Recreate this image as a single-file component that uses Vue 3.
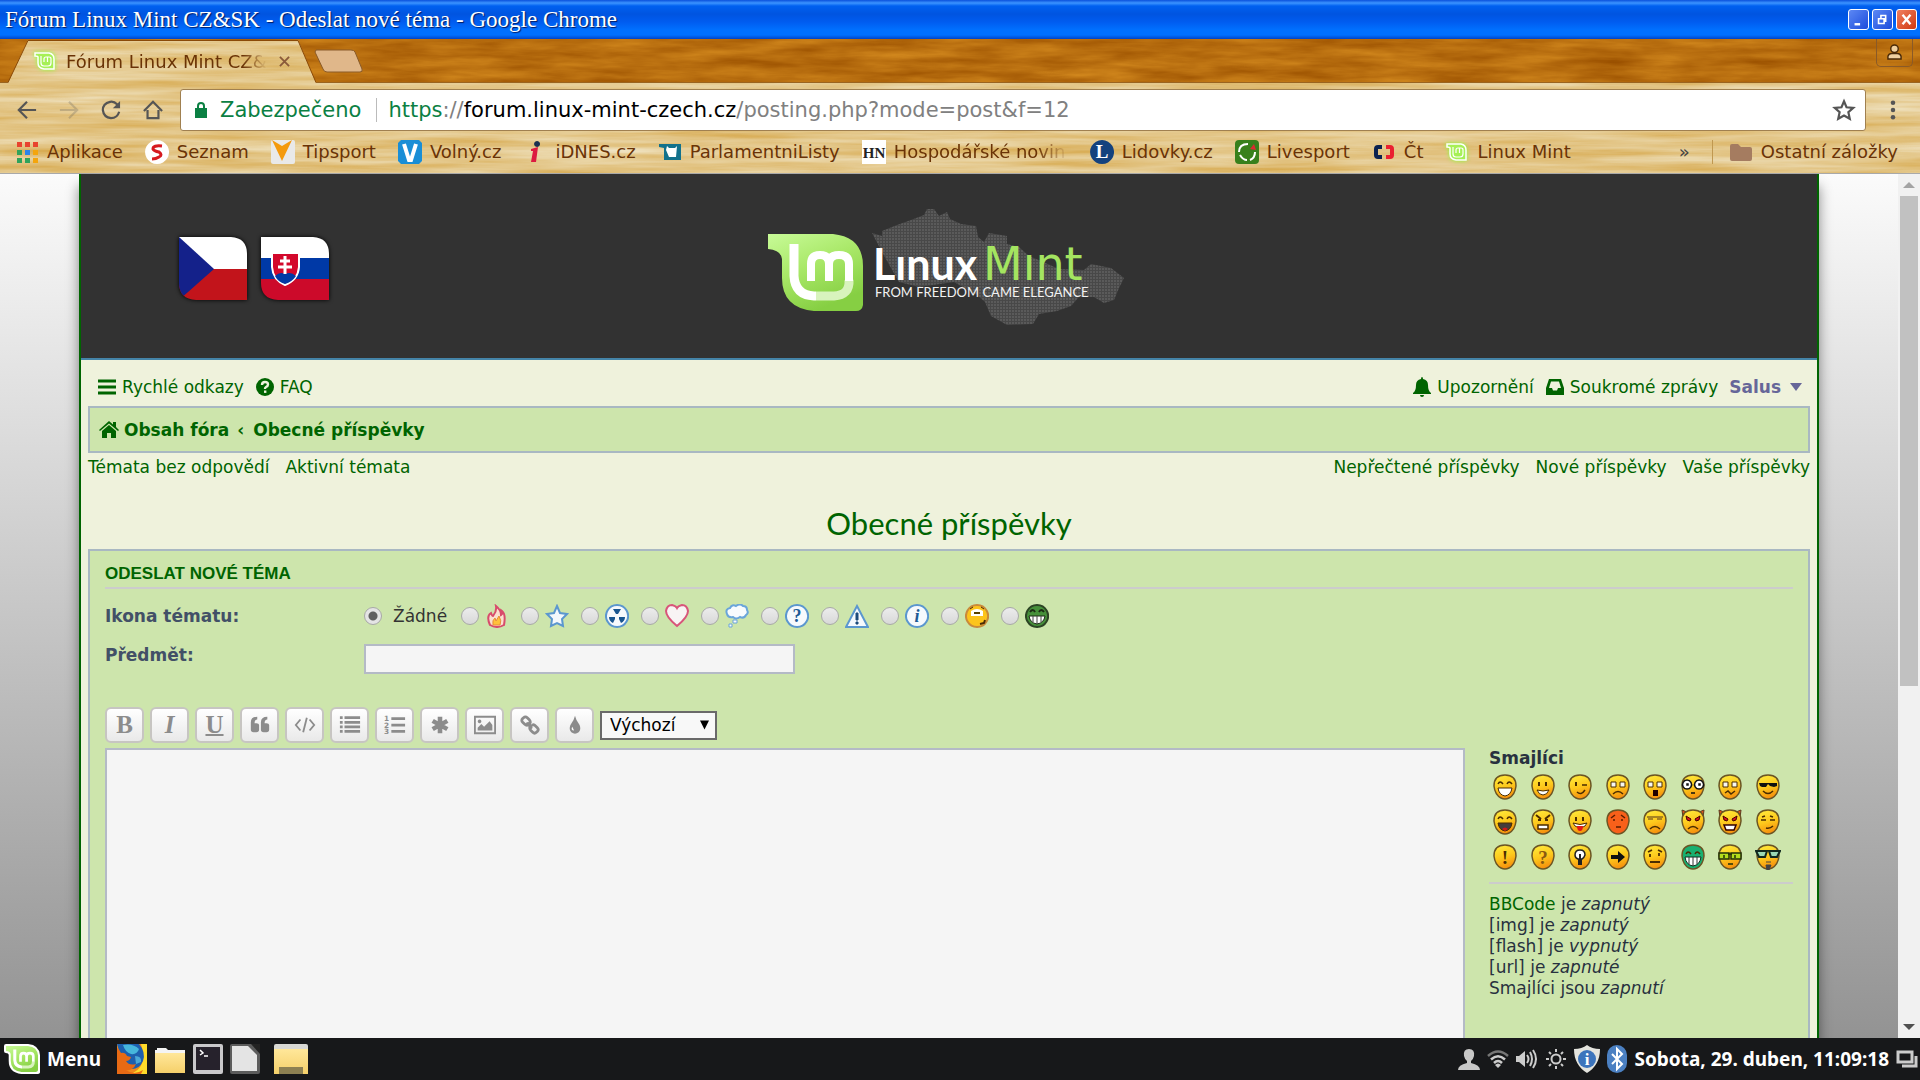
<template>
  <div class="desktop">
    <svg class="defs" aria-hidden="true">
      <defs>
        <filter id="wood-light" x="0" y="0" width="100%" height="100%" color-interpolation-filters="sRGB">
          <feTurbulence type="fractalNoise" baseFrequency="0.006 0.12" numOctaves="4" seed="7" />
          <feColorMatrix values="0.12 0 0 0 0.83  0.28 0 0 0 0.635  0.56 0 0 0 0.25  0 0 0 0 1" />
        </filter>
        <filter id="wood-dark" x="0" y="0" width="100%" height="100%" color-interpolation-filters="sRGB">
          <feTurbulence type="fractalNoise" baseFrequency="0.014 0.1" numOctaves="4" seed="3" />
          <feColorMatrix values="0.26 0 0 0 0.59  0.26 0 0 0 0.3  0.14 0 0 0 -0.01  0 0 0 0 1" />
        </filter>
        <linearGradient id="mint-fill" x1="0" y1="0" x2="0.5" y2="1">
          <stop offset="0" stop-color="#c8fb98" />
          <stop offset="0.5" stop-color="#a9e868" />
          <stop offset="1" stop-color="#86cf43" />
        </linearGradient>
        <linearGradient id="face" x1="0.3" y1="0" x2="0.6" y2="1">
          <stop offset="0" stop-color="#ffe93a" />
          <stop offset="0.5" stop-color="#fdc81c" />
          <stop offset="1" stop-color="#f58a0c" />
        </linearGradient>
        <linearGradient id="folder" x1="0" y1="0" x2="0" y2="1">
          <stop offset="0" stop-color="#ffe79a" />
          <stop offset="1" stop-color="#f5d06a" />
        </linearGradient>
        <pattern id="dots" width="3" height="3" patternUnits="userSpaceOnUse">
          <rect width="3" height="3" fill="#484848" />
          <rect width="2" height="2" fill="#5a5a5a" />
        </pattern>
        <symbol id="mint" viewBox="0 0 95 77">
          <path d="M0 0H65Q95 3 95 32V71Q94 77 88 77H46Q14 74 14 44V25Q13 16 0 15Z" fill="url(#mint-fill)" />
          <path d="M48 62H66Q82 61 81 46" fill="none" stroke="#d8f3bd" stroke-width="9" />
          <path d="M26 10V42Q27 61 46 62H48" fill="none" stroke="#fff" stroke-width="9" />
          <path d="M43 47V30Q43 21 52 21Q61 21 61 30V47M61 30Q61 21 71 21Q81 21 81 30V47" fill="none" stroke="#fff" stroke-width="8" />
        </symbol>
        <symbol id="mint-small" viewBox="0 0 24 24">
          <path d="M2 4H16Q21 5 21 10V20H11Q5 19 5 14V8Q5 7 2 7Z" fill="#a6f056" stroke="#fff" stroke-width="1.500" />
          <path d="M8 7V14Q8 17 11 17H15Q18 17 18 14V10Q18 8 16 8H13Q11 8 11 10V13M14.500 8V13" fill="none" stroke="#fff" stroke-width="1.200" />
        </symbol>
      </defs>
    </svg>

    <header class="titlebar">
      <h1>Fórum Linux Mint CZ&amp;SK - Odeslat nové téma - Google Chrome</h1>
      <div class="window-buttons">
        <button aria-label="Minimalizovat"><svg viewBox="0 0 20 24"><path d="M5 18h7" stroke="#fff" stroke-width="3" /></svg></button>
        <button aria-label="Obnovit"><svg viewBox="0 0 20 24"><path d="M5 11h7v6H5zM8 10V7h6v7h-2" fill="none" stroke="#fff" stroke-width="2" /></svg></button>
        <button class="close" aria-label="Zavřít"><svg viewBox="0 0 20 24"><path d="M5 6l10 12M15 6L5 18" stroke="#fff" stroke-width="3" /></svg></button>
      </div>
    </header>

    <section class="chrome">
      <svg class="wood"><rect width="100%" height="100%" filter="url(#wood-light)" /></svg>
      <div class="tabstrip">
        <svg class="wood"><rect width="100%" height="100%" filter="url(#wood-dark)" /></svg>
        <div class="tab">
          <svg class="wood tab-wood"><rect width="100%" height="100%" filter="url(#wood-light)" /></svg>
          <svg class="wood" viewBox="0 0 308 43"><path d="M0 43L20 1H290L308 43" fill="none" stroke="#8a4a08" /></svg>
          <svg class="favicon glow"><use href="#mint-small" /></svg>
          <span class="tab-title">Fórum Linux Mint CZ&amp;</span>
          <button class="tab-close" aria-label="Zavřít kartu"><svg viewBox="0 0 12 12"><path d="M1 1l10 10M11 1L1 11" stroke="#8a5a3a" stroke-width="2" /></svg></button>
        </div>
        <button class="new-tab" aria-label="Nová karta"><svg viewBox="0 0 50 24"><path d="M2 1H37Q40 1 41 3L48 20Q49 23 46 23H13Q10 23 9 20L1 3Z" fill="#e0b78a" stroke="#8a5a28" /></svg></button>
        <button class="profile" aria-label="Profil">
          <svg viewBox="0 0 16 18"><circle cx="8" cy="5" r="4" fill="#f0d0a0" stroke="#4a2a08" stroke-width="1.500" /><path d="M1 16V13Q2 10 5 10H11Q14 10 15 13V16Z" fill="#f0d0a0" stroke="#4a2a08" stroke-width="1.500" /></svg>
        </button>
      </div>

      <div class="toolbar">
        <div class="nav-buttons">
          <button v-for="n in navButtons" :key="n.label" :class="{ off: n.off }" :aria-label="n.label">
            <svg viewBox="0 0 22 22">
              <path :d="n.d" fill="none" stroke="#555" stroke-width="2.400" />
              <path v-if="n.tip" :d="n.tip" fill="#555" />
            </svg>
          </button>
        </div>
        <div class="omnibox">
          <svg class="lock" viewBox="0 0 14 18"><path d="M1 7H13V17H1Z" fill="#0b8043" /><path d="M4 8V5Q4 2 7 2Q10 2 10 5V8" fill="none" stroke="#0b8043" stroke-width="2" /></svg>
          <span class="secure">Zabezpečeno</span>
          <span class="url"><i>https</i>://<b>forum.linux-mint-czech.cz</b>/posting.php?mode=post&amp;f=12</span>
          <button class="star" aria-label="Přidat záložku"><svg viewBox="0 0 22 22"><path d="M11 3L13.300 8.500L19.500 9L15 13L16.300 19L11 16L5.700 19L7 13L2.500 9L8.700 8.500Z" fill="none" stroke="#555" stroke-width="2" /></svg></button>
        </div>
        <button class="dots" aria-label="Nabídka"><svg viewBox="0 0 6 22"><circle cx="3" cy="3" r="2.500" /><circle cx="3" cy="11" r="2.500" /><circle cx="3" cy="19" r="2.500" /></svg></button>
      </div>

      <nav class="bookmarks">
        <a v-for="b in bookmarks" :key="b.name" href="#" class="bookmark" :class="{ faded: b.faded }">
          <svg class="favicon" :class="{ glow: b.mint }" viewBox="0 0 24 24">
            <use v-if="b.mint" href="#mint-small" />
            <path v-for="(p, i) in b.parts" :key="i" :d="p[0]" :fill="p[1]" :stroke="p[2]" :stroke-width="p[3]" />
            <text v-if="b.glyph" x="12" y="18" text-anchor="middle" :font-size="b.size" font-weight="bold" font-family="Liberation Serif, serif" :fill="b.color">{{ b.glyph }}</text>
          </svg>
          <span>{{ b.name }}</span>
        </a>
        <span class="more">»</span>
        <a href="#" class="bookmark other">
          <svg class="favicon" viewBox="0 0 24 24"><path d="M1 6Q1 4 3 4H9L12 7H21Q23 7 23 9V19Q23 21 21 21H3Q1 21 1 19Z" fill="#a57c60" /></svg>
          <span>Ostatní záložky</span>
        </a>
      </nav>
    </section>

    <main class="viewport">
      <div class="page">
        <div class="wrap">
          <div class="banner">
            <div class="flags">
              <svg viewBox="0 0 68 63"><clipPath id="leaf"><path d="M0 0H52Q68 1 68 17V63H17Q0 62 0 46Z" /></clipPath><g clip-path="url(#leaf)"><path d="M0 0H68V32H0Z" fill="#fff" /><path d="M0 32H68V63H0Z" fill="#c2141b" /><path d="M0 0L35 32L0 63Z" fill="#14218a" /></g></svg>
              <svg viewBox="0 0 68 63"><g clip-path="url(#leaf)"><path d="M0 0H68V21H0Z" fill="#fff" /><path d="M0 21H68V42H0Z" fill="#0039a6" /><path d="M0 42H68V63H0Z" fill="#cc0a2a" /></g><path d="M11 16H38V30Q37 43 24 48Q12 43 11 30Z" fill="#d3082c" stroke="#fff" stroke-width="2" /><path d="M14 39Q19 34 24 37Q30 34 35 39Q31 45 24 47Q17 45 14 39Z" fill="#0039a6" /><path d="M24 19V37M19 24H29M17 30H31" stroke="#fff" stroke-width="3" /></svg>
            </div>
            <svg class="logo" viewBox="0 0 420 152">
              <path d="M133 43L143 46V41L158 35L172 30L185 25L188 19H195L200 26L208 22L211 29L222 34L237 36L239 47L245 52L250 43L268 46V54L280 57L290 66L302 71L320 79L345 80L352 74L372 78L385 88L380 98L375 110L365 113L355 107H340L332 116L318 121L300 124L294 134L268 135L252 126L246 112L238 105L215 92L180 97L160 92L152 78L143 62Z" fill="url(#dots)" />
              <use href="#mint" x="29" y="44" width="95" height="77" />
              <text x="134" y="90" class="logo-linux">Lınux</text>
              <text x="244" y="90" class="logo-mint">Mınt</text>
              <text x="136" y="107" class="logo-slogan">FROM FREEDOM CAME ELEGANCE</text>
            </svg>
          </div>

          <div class="content">
            <nav class="navbar">
              <a href="#"><svg class="fa" viewBox="0 0 20 20"><path d="M1 4H19M1 10H19M1 16H19" stroke="#006400" stroke-width="3" /></svg>Rychlé odkazy</a>
              <a href="#"><svg class="fa" viewBox="0 0 20 20"><circle cx="10" cy="10" r="9" fill="#006400" /><path d="M7 8Q7 5 10 5Q13 5 13 7.500Q13 9 11 10Q10 10.500 10 12" fill="none" stroke="#eff2dc" stroke-width="2.400" /><path d="M9 13.500h2.400v2.400H9z" fill="#eff2dc" /></svg>FAQ</a>
              <a href="#" class="push"><svg class="fa" viewBox="0 0 20 20"><path d="M10 0Q11 0 11 2Q16 3 16 8Q16 14 19 16V17H1V16Q4 14 4 8Q4 3 9 2Q9 0 10 0ZM8 18H12Q12 20 10 20Q8 20 8 18Z" fill="#006400" /></svg>Upozornění</a>
              <a href="#"><svg class="fa" viewBox="0 0 20 20"><path d="M4 2H16L19 11V18H1V11ZM6 4.500L4 11H7L8 13.500H12L13 11H16L14 4.500Z" fill="#006400" fill-rule="evenodd" /></svg>Soukromé zprávy</a>
              <a href="#" class="user">Salus<svg viewBox="0 0 12 8"><path d="M0 0H12L6 8Z" fill="#669" /></svg></a>
            </nav>
            <div class="breadcrumbs">
              <svg class="fa" viewBox="0 0 20 20"><path d="M0 10L10 1L14 4.500V2H17V7L20 10L19 11L10 3.500L1 11ZM3 11L10 5L17 11V18H12V13H8V18H3Z" fill="#006400" /></svg>
              <a href="#">Obsah fóra</a><span>‹</span><a href="#">Obecné příspěvky</a>
            </div>
            <div class="sublinks">
              <a href="#">Témata bez odpovědí</a>
              <a href="#">Aktivní témata</a>
              <a href="#" class="push">Nepřečtené příspěvky</a>
              <a href="#">Nové příspěvky</a>
              <a href="#">Vaše příspěvky</a>
            </div>
            <h2><a href="#">Obecné příspěvky</a></h2>

            <form class="panel" @submit.prevent>
              <h3>Odeslat nové téma</h3>
              <div class="row icons" role="radiogroup" aria-labelledby="icon-label">
                <span id="icon-label" class="label">Ikona tématu:</span>
                <label class="none"><input v-model="icon" type="radio" name="icon" value="none">Žádné</label>
                <label v-for="t in topicIcons" :key="t.name" class="topic">
                  <input v-model="icon" type="radio" name="icon" :value="t.name" :aria-label="t.name">
                  <svg viewBox="0 0 24 24">
                    <path v-for="(p, i) in t.parts" :key="i" :d="p[0]" :fill="p[1]" :stroke="p[2]" :stroke-width="p[3]" />
                    <text v-if="t.glyph" x="12" y="18" text-anchor="middle" font-size="18" font-weight="bold" font-family="Liberation Serif, serif" :font-style="t.style" fill="#1c5a96">{{ t.glyph }}</text>
                  </svg>
                </label>
              </div>
              <div class="row subject">
                <label class="label" for="subject">Předmět:</label>
                <input id="subject" v-model="subject" type="text">
              </div>

              <div class="format">
                <button v-for="f in formatButtons" :key="f.name" type="button" :aria-label="f.name">
                  <span v-if="f.text" :class="f.name">{{ f.text }}</span>
                  <svg v-else viewBox="0 0 24 24">
                    <path v-for="(p, i) in f.parts" :key="i" :d="p[0]" :fill="p[1]" :stroke="p[2]" :stroke-width="p[3]" />
                    <text v-for="(n, i) in f.numbers" :key="n" x="0" :y="8 + i * 7" font-size="8" font-weight="bold" font-family="DejaVu Sans, sans-serif" fill="#8c8c8c">{{ n }}</text>
                  </svg>
                </button>
                <div class="size">
                  <select v-model="size" aria-label="Velikost písma">
                    <option>Výchozí</option>
                  </select>
                  <svg viewBox="0 0 10 10"><path d="M0 0H10L5 10Z" /></svg>
                </div>
              </div>

              <div class="message">
                <textarea v-model="message" aria-label="Zpráva"></textarea>
                <aside>
                  <strong>Smajlíci</strong>
                  <div class="smilies">
                    <a v-for="(s, n) in smilies" :key="n" href="#">
                      <svg viewBox="0 0 26 26">
                        <path v-if="s.horns" d="M2 1L7 3L3 9ZM24 1L19 3L23 9Z" fill="#e8501a" stroke="#5a3a20" />
                        <path d="M13 1Q24 1 24 12Q23 21 17 24Q13 26 9 24Q3 21 2 12Q2 1 13 1Z" :fill="s.fill || 'url(#face)'" stroke="#6b5524" stroke-width="1.500" />
                        <path v-for="(p, i) in s.parts" :key="i" :d="p[0]" :fill="p[1]" :stroke="p[2]" :stroke-width="p[3]" />
                        <text v-if="s.glyph" x="13" y="20" text-anchor="middle" font-size="19" font-weight="bold" font-family="Liberation Serif, serif" :fill="s.color">{{ s.glyph }}</text>
                      </svg>
                    </a>
                  </div>
                  <hr>
                  <p><a href="#">BBCode</a> je <em>zapnutý</em></p>
                  <p>[img] je <em>zapnutý</em></p>
                  <p>[flash] je <em>vypnutý</em></p>
                  <p>[url] je <em>zapnuté</em></p>
                  <p>Smajlíci jsou <em>zapnutí</em></p>
                </aside>
              </div>
            </form>
          </div>
        </div>
      </div>
      <div class="scrollbar">
        <svg viewBox="0 0 12 6"><path d="M0 6H12L6 0Z" fill="#a3a3a3" /></svg>
        <div class="thumb"></div>
        <svg viewBox="0 0 12 6"><path d="M0 0H12L6 6Z" fill="#505050" /></svg>
      </div>
    </main>

    <footer class="taskbar">
      <button class="menu">
        <svg viewBox="-6 -6 107 89"><path d="M0 0H65Q95 3 95 32V77H46Q14 74 14 44V25Q13 16 0 15Z" fill="#fff" stroke="#fff" stroke-width="12" stroke-linejoin="round" /><use href="#mint" width="95" height="77" /></svg>
        Menu
      </button>
      <button aria-label="Firefox">
        <svg viewBox="0 0 30 30"><path d="M0 0H30V30H0Z" fill="#f08a1c" /><path d="M24 0H30V30H14Q28 24 26 8Z" fill="#ffdc2a" /><path d="M0 0H22Q29 8 26 17Q22 26 13 25Q3 22 3 10Z" fill="#1d5fae" /><path d="M6 1Q16 -1 22 5Q20 11 14 10Q8 8 6 1Z" fill="#46b6dc" /><path d="M18 12Q25 12 24 18L19 20Z" fill="#4aa8d8" /><path d="M0 4Q3 6 4 9Q8 8 10 12L14 13Q13 17 9 17Q12 22 19 20Q16 27 9 26Q17 32 26 26L24 30H0Z" fill="#e86a14" /></svg>
      </button>
      <button aria-label="Soubory">
        <svg viewBox="0 0 32 30"><path d="M1 8V6H3V4H12L14 6H31V12H1Z" fill="#f4f4f4" /><path d="M1 9H31V29H1Z" fill="url(#folder)" /></svg>
      </button>
      <button aria-label="Terminál">
        <svg viewBox="0 0 30 30"><rect width="30" height="30" rx="2" fill="#c9c9cb" /><rect x="3" y="3" width="24" height="23" fill="#26222c" /><path d="M7 6L10 9L7 11M11 12H15" fill="none" stroke="#fff" stroke-width="1.500" /></svg>
      </button>
      <button aria-label="LibreOffice">
        <svg viewBox="0 0 30 30"><rect width="30" height="30" rx="2" fill="#5c5c5c" /><path d="M2 2H18L27 11V27H2Z" fill="#e4e4e4" /><path d="M21 0H30V10Z" fill="#222" /></svg>
      </button>
      <button class="window" aria-label="Okno souborů">
        <svg viewBox="0 0 36 30"><path d="M1 2Q1 0 3 0H33Q35 0 35 2V29H1Z" fill="#d8d8d4" /><path d="M1 5H35V30H1Z" fill="url(#folder)" /><path d="M6 23H30V30H6Z" fill="#8d8052" /></svg>
      </button>

      <div class="tray">
        <svg viewBox="0 0 22 22"><path d="M11 1Q17 1 16 8Q15 12 13 13V15Q22 17 22 22H0Q0 17 9 15V13Q7 12 6 8Q5 1 11 1Z" fill="#c8c8c8" /></svg>
        <svg viewBox="0 0 22 22" fill="none" stroke-width="2.500"><path d="M1 8Q11 -1 21 8" stroke="#777" /><path d="M4 11.500Q11 5 18 11.500M7 15Q11 11 15 15" stroke="#ccc" /><path d="M8 17Q11 14 14 17L11 20Z" fill="#ccc" /></svg>
        <svg viewBox="0 0 22 22"><path d="M0 8H3L9 3V19L3 14H0Z" fill="#ccc" /><path d="M11 7Q14 11 11 15M14 4Q18 11 14 18M17 2Q23 11 17 20" fill="none" stroke="#ccc" stroke-width="2" /></svg>
        <svg viewBox="0 0 22 22"><circle cx="11" cy="11" r="4.500" fill="none" stroke="#ccc" stroke-width="2" /><path d="M11 1V4M11 18V21M1 11H4M18 11H21M4 4L6 6M16 16L18 18M18 4L16 6M4 18L6 16" stroke="#ccc" stroke-width="2" /></svg>
        <svg class="wide" viewBox="0 0 26 28"><path d="M13 0Q18 4 26 4Q26 20 13 28Q0 20 0 4Q8 4 13 0Z" fill="#e4e4de" /><circle cx="13" cy="14" r="9" fill="#3c74bc" /><text x="13" y="20" text-anchor="middle" font-size="17" font-weight="bold" font-family="Liberation Serif, serif" fill="#fff">i</text></svg>
        <svg class="wide bt" viewBox="0 0 20 28"><rect width="20" height="28" rx="10" fill="#4b80c2" /><path d="M5 9L15 19L10 24V4L15 9L5 19" fill="none" stroke="#fff" stroke-width="2" /></svg>
        <time>Sobota, 29. duben, 11:09:18</time>
        <svg viewBox="0 0 22 22"><path d="M2 4H16V14H2ZM6 18H20V8" fill="none" stroke="#ccc" stroke-width="3" /></svg>
      </div>
    </footer>
  </div>
</template>

<script setup>
import { ref } from "vue";

const icon = ref("none");
const subject = ref("");
const message = ref("");
const size = ref("Výchozí");

const navButtons = [
  { label: "Zpět", d: "M21 11H3M11 2L2 11L11 20" },
  { label: "Vpřed", d: "M1 11H19M11 2L20 11L11 20", off: true },
  { label: "Načíst", d: "M18 5Q14 1 10 2Q2 4 2 11Q3 19 11 20Q18 20 20 13", tip: "M21 1V9H13Z" },
  { label: "Domů", d: "M1 12L11 2L21 12M5 11V20H17V11" }
];

// every drawing part is [path, fill, stroke, stroke width]
const bookmarks = [
  {
    name: "Aplikace",
    parts: [
      ["M2 2h5v5H2zM10 2h5v5h-5zM18 2h5v5h-5z", "#e8432f"],
      ["M2 10h5v5H2zM2 18h5v5H2zM10 18h5v5h-5z", "#2fa35b"],
      ["M10 10h5v5h-5z", "#2a84ea"],
      ["M18 10h5v5h-5zM18 18h5v5h-5z", "#f4a50c"]
    ]
  },
  {
    name: "Seznam",
    parts: [
      ["M12 0a12 12 0 1 0 .1 0Z", "#fff"],
      ["M17 6Q8 5 8 9Q9 11 14 12Q18 15 14 17Q11 19 7 19", "none", "#d61a1f", 3]
    ]
  },
  {
    name: "Tipsport",
    parts: [
      ["M2 0H22Q24 0 24 2V22Q24 24 22 24H2Q0 24 0 22V2Q0 0 2 0Z", "#e9e9e9"],
      ["M1 0L11 6L21 0L11 21Z", "#f49a0e"]
    ]
  },
  {
    name: "Volný.cz",
    parts: [
      ["M3 0H21L24 3V21L21 24H3L0 21V3Z", "#1a8ed6"],
      ["M6 4L11 20H13L18 4", "none", "#fff", 4]
    ]
  },
  {
    name: "iDNES.cz",
    parts: [
      ["M8 9L15 7L13 22H8L10 11H8Z", "#dc1a40"],
      ["M14 1a3 3 0 1 0 .1 0Z", "#1a3050"]
    ]
  },
  {
    name: "ParlamentniListy",
    parts: [
      ["M1 4H23V20H6V8L1 7Z", "#12718c"],
      ["M9 6L11 8H17L19 6L18 17H11L8 10Z", "#fff"]
    ]
  },
  { name: "Hospodářské novin", faded: true, glyph: "HN", size: 15, color: "#222", parts: [["M0 0H24V24H0Z", "#fff"]] },
  { name: "Lidovky.cz", glyph: "L", size: 19, color: "#fff", parts: [["M12 0a12 12 0 1 0 .1 0Z", "#14427e"]] },
  {
    name: "Livesport",
    parts: [
      ["M4 0H20Q24 0 24 4V20Q24 24 20 24H4Q0 24 0 20V4Q0 0 4 0Z", "#38801c"],
      ["M13 4Q4 4 4 12M5 15Q8 20 12 20M15 20Q20 18 20 12", "none", "#fff", 2],
      ["M15 9L19 4L21 10Z", "#dc2a30"]
    ]
  },
  {
    name: "Čt",
    parts: [
      ["M10 7H6Q4 7 4 9V15Q4 17 6 17H10", "none", "#0c2350", 4],
      ["M14 7H18Q20 7 20 9V15Q20 17 18 17H14", "none", "#ea2030", 4]
    ]
  },
  { name: "Linux Mint", mint: true }
];

const blue = "#5b97cf";
const disc = ["M12 1a11 11 0 1 0 .1 0Z", "#f6f9fd", blue, 2];

const topicIcons = [
  {
    name: "Oheň",
    parts: [
      ["M5 21Q1 12 6 9Q7 12 8 12Q12 7 11 2Q16 6 16 11Q18 10 17 7Q21 10 19 21Q12 25 5 21Z", "#fbe0cf", "#d84c6c", 2],
      ["M8 21Q7 16 10 14L11 17L14 12Q17 17 15 21Z", "#ffc23a", "#e88a3a", 1]
    ]
  },
  { name: "Hvězda", parts: [["M12 2L15 9L22 10L17 15L18 22L12 19L6 22L7 15L2 10L9 9Z", "#f4f8fc", blue, 2]] },
  { name: "Radioaktivní", parts: [disc, ["M8 5H16L13 10H11ZM4 13H10L10 15L8 19Q4 17 4 13ZM20 13H14L14 15L16 19Q20 17 20 13Z", "#185590"]] },
  { name: "Srdce", parts: [["M12 22Q1 13 1 7Q2 1 7 1Q11 2 12 4Q13 2 17 1Q22 1 23 7Q23 13 12 22Z", "#f8f4f4", "#d8557a", 2]] },
  {
    name: "Myšlenka",
    parts: [
      ["M5 4Q7 0 11 2Q15 -1 18 2Q22 2 22 6Q24 9 21 11Q19 15 15 13Q11 16 8 13Q3 14 2 10Q0 5 5 4Z", "#f8fbfe", "#6aa5da", 2],
      ["M8 16H12V19H8ZM4 20h3v3H4Z", "#f8fbfe", "#6aa5da", 1]
    ]
  },
  { name: "Otázka", parts: [disc], glyph: "?" },
  { name: "Pozor", parts: [["M12 2L23 23H1Z", "#f6f9fd", blue, 2], ["M11 9H13L13 16H11ZM11 18H13V20H11Z", "#1c4a7a", "#1c4a7a", 1]] },
  { name: "Informace", parts: [disc], glyph: "i", style: "italic" },
  {
    name: "Překvapení",
    parts: [
      ["M12 1a11 11 0 1 0 .1 0Z", "#fcc41c", "#c98a3a", 2],
      ["M6 7Q12 3 18 7V12H6Z", "#fff"],
      ["M5 5L8 3M16 3L19 5", "none", "#4a2a08", 1],
      ["M9 8h6v2H9z", "#5a4200"],
      ["M15 20L19 19L20 16", "none", "#4a2a08", 2]
    ]
  },
  {
    name: "Úsměv",
    parts: [
      ["M12 1a11 11 0 1 0 .1 0Z", "#46903a", "#2c4424", 2],
      ["M5 8Q8 4 10 8M14 8Q16 4 19 8", "none", "#1c2c14", 2],
      ["M4 12H20Q19 19 12 20Q5 19 4 12Z", "#fff", "#1c2c14", 1],
      ["M8 12V18M12 12V20M16 12V18", "none", "#444", 1]
    ]
  }
];

const g = "#8c8c8c";

const formatButtons = [
  { name: "bold", text: "B" },
  { name: "italic", text: "I" },
  { name: "underline", text: "U" },
  { name: "quote", parts: [["M2 14V9Q2 3 9 3V6Q6 6 6 10H8Q11 10 11 12V17Q11 20 8 20H5Q2 20 2 17ZM13 14V9Q13 3 20 3V6Q17 6 17 10H19Q22 10 22 12V17Q22 20 19 20H16Q13 20 13 17Z", g]] },
  { name: "code", parts: [["M7 6L2 12L7 18M17 6L22 12L17 18M14 4L10 20", "none", g, 2]] },
  { name: "list", parts: [["M1 4h3M1 9h3M1 14h3M1 19h3M6 4H23M6 9H23M6 14H23M6 19H23", "none", g, 3]] },
  { name: "numbered", numbers: [1, 2, 3], parts: [["M8 5H23M8 12H23M8 19H23", "none", g, 3]] },
  { name: "item", parts: [["M12 3V21M4 7.500L20 16.500M20 7.500L4 16.500", "none", g, 5]] },
  { name: "image", parts: [["M1 3H23V21H1Z", "none", g, 2], ["M4 18V15L8 11L11 14L17 8L20 12V18ZM6 6a2 2 0 1 0 .1 0Z", g]] },
  { name: "link", parts: [["M10 12L12 10Q13 8 11 6L9 4Q7 2 5 4L4 5Q2 7 4 9L6 11Q8 13 10 12L9 9M14 16L12 14Q13 12 15 12Q16 11 18 13L20 15Q22 17 20 19L19 20Q17 22 15 20L13 18Q11 16 12 14", "none", g, 3]] },
  { name: "color", parts: [["M12 2Q13 7 17 12Q19 17 16 20Q12 23 8 20Q5 17 7 12Q11 7 12 2Z", g], ["M9 14Q7 18 11 18Z", "#fff"]] }
];

const k = "#4a2c00";
const eyes = ["M8 8h2v4H8zM15 8h2v4h-2z", k];
const happy = ["M6 10Q8 6 11 10M15 10Q17 6 20 10", "none", k, 1.5];
const frown = ["M8 20Q13 15 18 20", "none", k, 1.5];
const angry = ["M6 7L11 10L10 12L7 11ZM20 7L15 10L16 12L19 11Z", "#d8101a", "#400", 1];
const bigEyes = ["M6 8h5v5H6zM15 8h5v5h-5z", "#f8f8f0", k, 1];

const smilies = [
  { parts: [happy, ["M6 14H20Q19 21 13 22Q7 21 6 14Z", "#fff", k, 1]] },
  { parts: [eyes, ["M7 16Q13 18 19 16Q17 21 13 21Q9 21 7 16Z", "#fff", k, 1]] },
  { parts: [["M8 8h2v4H8z", k], ["M15 11H20M10 18Q14 22 18 16", "none", k, 1.5]] },
  { parts: [bigEyes, frown] },
  { parts: [bigEyes, ["M11 16h5v6h-5z", "#200"]] },
  { parts: [["M7 6a4.500 4.500 0 1 0 .1 0ZM19 6a4.500 4.500 0 1 0 .1 0Z", "#fff", "#111", 1.5], ["M7 10h1v1H7zM19 10h1v1h-1zM11 19h4", "#000", "#111", 1.5]] },
  { parts: [bigEyes, ["M8 19L11 17L14 20L18 17", "none", k, 1.5]] },
  { parts: [["M4 9H22V12L19 13L15 12L13 10L11 13H7L5 12Z", "#111"], ["M8 17Q13 22 18 17", "none", k, 1.5]] },
  { parts: [happy, ["M6 14H20Q19 21 13 22Q7 21 6 14Z", "#443c3c", k, 1], ["M10 20Q13 17 16 20L13 22Z", "#d01818"]] },
  { parts: [["M6 6L11 10M20 6L15 10M8 11h3M15 11h3", "none", k, 2], ["M8 16H18V20H8Z", "#fff", k, 1.5]] },
  { parts: [eyes, ["M6 14Q13 17 20 14Q18 18 16 18H10Q8 18 6 14Z", "#fff", k, 1], ["M10 17H16Q16 22 13 22Q10 22 10 17Z", "#e01818"]] },
  { fill: "#f8601a", parts: [["M6 9L10 6M16 6L20 9M8 11h2M16 11h2M11 18h5", "none", "#5a1c00", 1.5]] },
  { parts: [["M6 10H11M15 10H20M5 8H21", "none", "#8a6a20", 1.5], frown] },
  { horns: true, parts: [angry, frown] },
  { horns: true, parts: [angry, ["M7 16H19L17 21H9Z", "#fff", "#300", 1.5]] },
  { parts: [["M6 11H11M15 11H20M7 8L10 7M15 7L18 8M11 19Q15 20 18 17", "none", k, 1.5]] },
  { glyph: "!", color: "#4a2c00", parts: [] },
  { glyph: "?", color: "#8a5a10", parts: [] },
  { parts: [["M13 6Q18 6 18 11Q17 14 15 15H11Q8 14 8 11Q8 6 13 6Z", "#fff", "#222", 1.5], ["M11 15h4v6h-4zM12 10h2v6h-2z", "#222"]] },
  { parts: [["M6 11H13V7L20 13L13 19V15H6Z", "#111"]] },
  { parts: [["M6 8L10 6M16 6L20 8M8 10v3M17 9v3M8 18H18", "none", k, 1.8]] },
  { fill: "#18b070", parts: [happy, ["M5 13H21Q20 21 13 22Q6 21 5 13Z", "#fff", "#0c3020", 1], ["M9 13V20M13 13V22M17 13V20", "none", "#333", 1]] },
  { parts: [["M2 9H12V15H2ZM14 9H24V15H14ZM11 10h4", "#b4dc1c", "#223008", 1.5], ["M7 11v3M18 11v3M11 20h5", "none", "#223008", 1.5]] },
  { parts: [["M1 7H12L10 13H4ZM14 7H25L22 13H16Z", "#9ad8b4", "#102820", 2], ["M11 18h5M11 21H16L14 26H12Z", "#444", "#444", 1]] }
];
</script>

<style>
body {
  margin: 0;
  overflow: hidden;
}
</style>

<style scoped>
.desktop {
  display: flex;
  flex-direction: column;
  height: 100vh;
  font-family: "DejaVu Sans", sans-serif;
  font-size: 17px;
}

.defs {
  position: absolute;
  width: 0;
  height: 0;
}

button {
  padding: 0;
  border: none;
  background: none;
  font: inherit;
  color: inherit;
}

a {
  color: #006400;
  text-decoration: none;
}

svg {
  display: block;
  flex: none;
}

.titlebar {
  display: flex;
  align-items: center;
  justify-content: space-between;
  height: 39px;
  padding: 0 3px 0 5px;
  box-sizing: border-box;
  background: linear-gradient(#0a50dc 0, #3c94ff 3px, #0060f0 6px, #0054e0 14px, #005cf0 22px, #0070ff 30px, #0070ff 35px, #0044c8 39px);
  color: #fff;
}

h1 {
  margin: 0;
  font: 23px/36px "Liberation Serif", serif;
  text-shadow: 1px 1px 1px #001a60;
}

.window-buttons {
  display: flex;
  gap: 3px;
}

.window-buttons button {
  width: 21px;
  height: 21px;
  box-sizing: border-box;
  border: 1px solid #fff;
  border-radius: 3px;
  background: linear-gradient(135deg, #5c88f4, #1c4cdc);
}

.window-buttons .close {
  background: linear-gradient(135deg, #f08060, #d03810);
}

.window-buttons svg {
  width: 19px;
  height: 19px;
}

.chrome {
  position: relative;
  flex: none;
  border-bottom: 1px solid #a9a9a9;
  color: #6a3306;
  font-size: 18px;
}

.wood {
  position: absolute;
  inset: 0;
  width: 100%;
  height: 100%;
}

.tabstrip {
  position: relative;
  display: flex;
  height: 43px;
  padding: 0 7px 0 8px;
  border-bottom: 1px solid #9a6420;
}

.tab {
  position: relative;
  display: flex;
  align-items: center;
  width: 308px;
  height: 44px;
  padding: 0 26px 0 25px;
  box-sizing: border-box;
}

.tab-wood {
  clip-path: polygon(0 100%, 20px 1px, 290px 1px, 100% 100%);
}

.favicon {
  position: relative;
  width: 24px;
  height: 24px;
}

.glow {
  filter: drop-shadow(0 0 2px #8aff30);
}

.tab-title {
  position: relative;
  flex: 1;
  margin-left: 9px;
  overflow: hidden;
  white-space: nowrap;
  mask-image: linear-gradient(90deg, #000 88%, transparent);
}

.tab-close {
  position: relative;
  margin-left: 12px;
}

.tab-close svg {
  width: 11px;
  height: 11px;
}

.new-tab {
  position: relative;
  align-self: center;
  margin-left: -2px;
}

.new-tab svg {
  width: 50px;
  height: 24px;
}

.profile {
  position: relative;
  display: flex;
  justify-content: center;
  align-items: center;
  width: 37px;
  height: 28px;
  margin-left: auto;
  border: 1px solid #8a5a28;
  border-top: none;
  border-radius: 0 0 5px 5px;
}

.profile svg {
  width: 15px;
  height: 17px;
}

.toolbar {
  position: relative;
  display: flex;
  align-items: center;
  gap: 16px;
  padding: 6px 24px 0 16px;
}

.nav-buttons {
  display: flex;
  gap: 20px;
}

.nav-buttons svg {
  width: 22px;
  height: 20px;
}

.off {
  opacity: 0.25;
}

.omnibox {
  display: flex;
  align-items: center;
  flex: 1;
  height: 40px;
  margin-right: 8px;
  padding: 0 9px 0 13px;
  border: 1px solid #a08050;
  border-radius: 3px;
  background: #fff;
  font-size: 21px;
  white-space: nowrap;
}

.lock {
  width: 14px;
  height: 18px;
}

.secure {
  margin-left: 12px;
  color: #0b8043;
}

.url {
  flex: 1;
  margin-left: 15px;
  padding-left: 11px;
  border-left: 1px solid #bbb;
  color: #808080;
}

.url i {
  color: #0b8043;
  font-style: normal;
}

.url b {
  color: #000;
  font-weight: normal;
}

.star svg {
  width: 24px;
  height: 24px;
}

.dots svg {
  width: 6px;
  height: 20px;
  fill: #555;
}

.bookmarks {
  position: relative;
  display: flex;
  align-items: center;
  gap: 22px;
  height: 41px;
  padding: 0 22px 1px 15px;
  white-space: nowrap;
}

.bookmark {
  display: flex;
  align-items: center;
  gap: 8px;
  color: #6a3306;
}

.faded span {
  width: 174px;
  overflow: hidden;
  mask-image: linear-gradient(90deg, #000 82%, transparent);
}

.more {
  margin-left: auto;
  color: #444;
}

.other {
  padding-left: 16px;
  border-left: 1px solid #c09850;
}

.viewport {
  display: flex;
  flex: 1;
  min-height: 0;
}

.page {
  flex: 1;
  min-width: 0;
  overflow: hidden;
  background: linear-gradient(#fbfbfb, #939393);
}

.wrap {
  margin: 0 79px;
  border: solid #006400;
  border-width: 0 2px;
  background: #eff2dc;
  box-shadow: 0 12px 12px rgba(0, 0, 0, 0.45);
  color: #28313f;
}

.banner {
  display: flex;
  align-items: center;
  height: 184px;
  border-bottom: 2px solid #4484a8;
  background: #323232;
}

.flags {
  display: flex;
  flex: 1;
  gap: 14px;
  padding: 4px 0 0 98px;
}

.flags svg {
  width: 68px;
  height: 63px;
  filter: drop-shadow(0 0 2px #000);
}

.logo {
  width: 420px;
  height: 152px;
}

.banner::after {
  content: "";
  flex: 1;
  padding-left: 98px;
}

.logo-linux {
  font: bold 43px Lato, sans-serif;
  fill: #fff;
}

.logo-mint {
  font: 46px "DejaVu Sans", sans-serif;
  fill: #a4e460;
}

.logo-slogan {
  font: 13px Lato, sans-serif;
  fill: #f2f2f2;
}

.content {
  padding: 0 7px;
}

.navbar {
  display: flex;
  align-items: center;
  gap: 11px;
  height: 38px;
  padding: 8px 8px 0 9px;
}

.navbar a {
  display: flex;
  align-items: center;
  gap: 5px;
}

.fa {
  width: 20px;
  height: 20px;
}

.push {
  margin-left: auto;
}

.navbar .user {
  gap: 9px;
  color: #669;
  font-weight: bold;
}

.user svg {
  width: 12px;
  height: 8px;
}

.breadcrumbs {
  display: flex;
  align-items: center;
  height: 43px;
  padding: 0 9px;
  border: 2px solid #a9b8c2;
  background: #cde5ac;
  color: #006400;
  font-weight: bold;
}

.breadcrumbs a:first-of-type {
  margin-left: 5px;
}

.breadcrumbs span {
  margin: 0 9px 0 8px;
}

.sublinks {
  display: flex;
  align-items: center;
  gap: 16px;
  height: 28px;
}

h2 {
  margin: 0;
  padding-top: 17px;
  font: 31px/50px Lato, sans-serif;
  text-align: center;
}

.panel {
  margin-top: 1px;
  padding: 0 15px 40px;
  border: 2px solid #a9b8c2;
  background: #cde5ac;
}

h3 {
  margin: 0 0 15px;
  padding-top: 10px;
  border-bottom: 2px solid #ccc;
  color: #006400;
  font: bold 17px/26px "Liberation Sans", sans-serif;
  text-transform: uppercase;
}

.row {
  display: flex;
}

.label {
  width: 259px;
  color: #425067;
  font-weight: bold;
  line-height: 22px;
}

.icons {
  align-items: center;
  height: 24px;
  margin-bottom: 16px;
  color: #333;
}

.none {
  display: flex;
  align-items: center;
  gap: 11px;
  margin-right: 14px;
}

.topic {
  display: flex;
  align-items: center;
  gap: 6px;
  margin-right: 12px;
}

.topic svg {
  width: 24px;
  height: 24px;
}

input[type="radio"] {
  appearance: none;
  width: 18px;
  height: 18px;
  margin: 0;
  border: 1px solid #a8a8a8;
  border-radius: 50%;
  background: linear-gradient(#ececec, #d8d8d8);
}

input[type="radio"]:checked {
  background: radial-gradient(circle, #606060 0 4px, #e4e4e4 5px);
}

.subject {
  margin-bottom: 33px;
}

#subject {
  width: 431px;
  height: 30px;
  box-sizing: border-box;
  border: 2px solid #b4bac6;
  background: #f5f5f5;
  font: inherit;
}

.format {
  display: flex;
  gap: 6px;
  margin-bottom: 5px;
}

.format button {
  display: flex;
  align-items: center;
  justify-content: center;
  width: 39px;
  height: 36px;
  box-sizing: border-box;
  border: 2px solid #c7c5c2;
  border-radius: 6px;
  background: linear-gradient(#fff, #e9e9e9);
  color: #8c8c8c;
  font: bold 25px/30px "Liberation Serif", serif;
}

.format button svg {
  width: 22px;
  height: 22px;
}

.italic {
  font-style: italic;
}

.underline {
  text-decoration: underline;
  text-decoration-thickness: 2px;
}

.size {
  position: relative;
  align-self: center;
}

select {
  appearance: none;
  display: block;
  width: 117px;
  height: 29px;
  padding: 0 8px;
  border: 2px solid #6a6a6a;
  border-radius: 0;
  background: #f8f8f8;
  color: #000;
  font: inherit;
}

.size svg {
  position: absolute;
  top: 9px;
  right: 8px;
  width: 9px;
  height: 10px;
}

.message {
  display: flex;
  gap: 24px;
}

textarea {
  flex: 1;
  height: 420px;
  box-sizing: border-box;
  border: 2px solid #b4bac6;
  background: #f5f5f5;
  font: inherit;
  resize: none;
}

aside {
  width: 304px;
  line-height: 21px;
}

aside strong {
  display: block;
}

.smilies {
  display: grid;
  grid-template-columns: repeat(8, 32px);
  grid-auto-rows: 35px;
  justify-content: space-between;
  place-items: center;
  padding-right: 9px;
}

.smilies svg {
  width: 26px;
  height: 26px;
}

hr {
  height: 2px;
  margin: 8px 0 10px;
  border: none;
  background: #ccc;
}

p {
  margin: 0;
}

.scrollbar {
  display: flex;
  flex-direction: column;
  align-items: center;
  width: 18px;
  padding: 8px 2px;
  background: #f1f1f1;
}

.scrollbar svg {
  width: 12px;
  height: 6px;
}

.thumb {
  width: 18px;
  height: 490px;
  margin: 8px 0 auto;
  background: #c1c1c1;
}

.taskbar {
  display: flex;
  align-items: center;
  flex: none;
  gap: 7px;
  height: 42px;
  padding: 0 2px 0 4px;
  background: #17181a;
  color: #fff;
  font: bold 19px "Noto Sans", sans-serif;
}

.taskbar button svg {
  height: 30px;
}

.menu {
  display: flex;
  align-items: center;
  gap: 7px;
  margin-right: 9px;
}

.window {
  margin-left: 6px;
}

.tray {
  display: flex;
  align-items: center;
  gap: 7px;
  margin-left: auto;
}

.tray svg {
  width: 22px;
  height: 22px;
}

.tray .wide {
  width: 26px;
  height: 28px;
}

.tray .bt {
  width: 20px;
}
</style>
